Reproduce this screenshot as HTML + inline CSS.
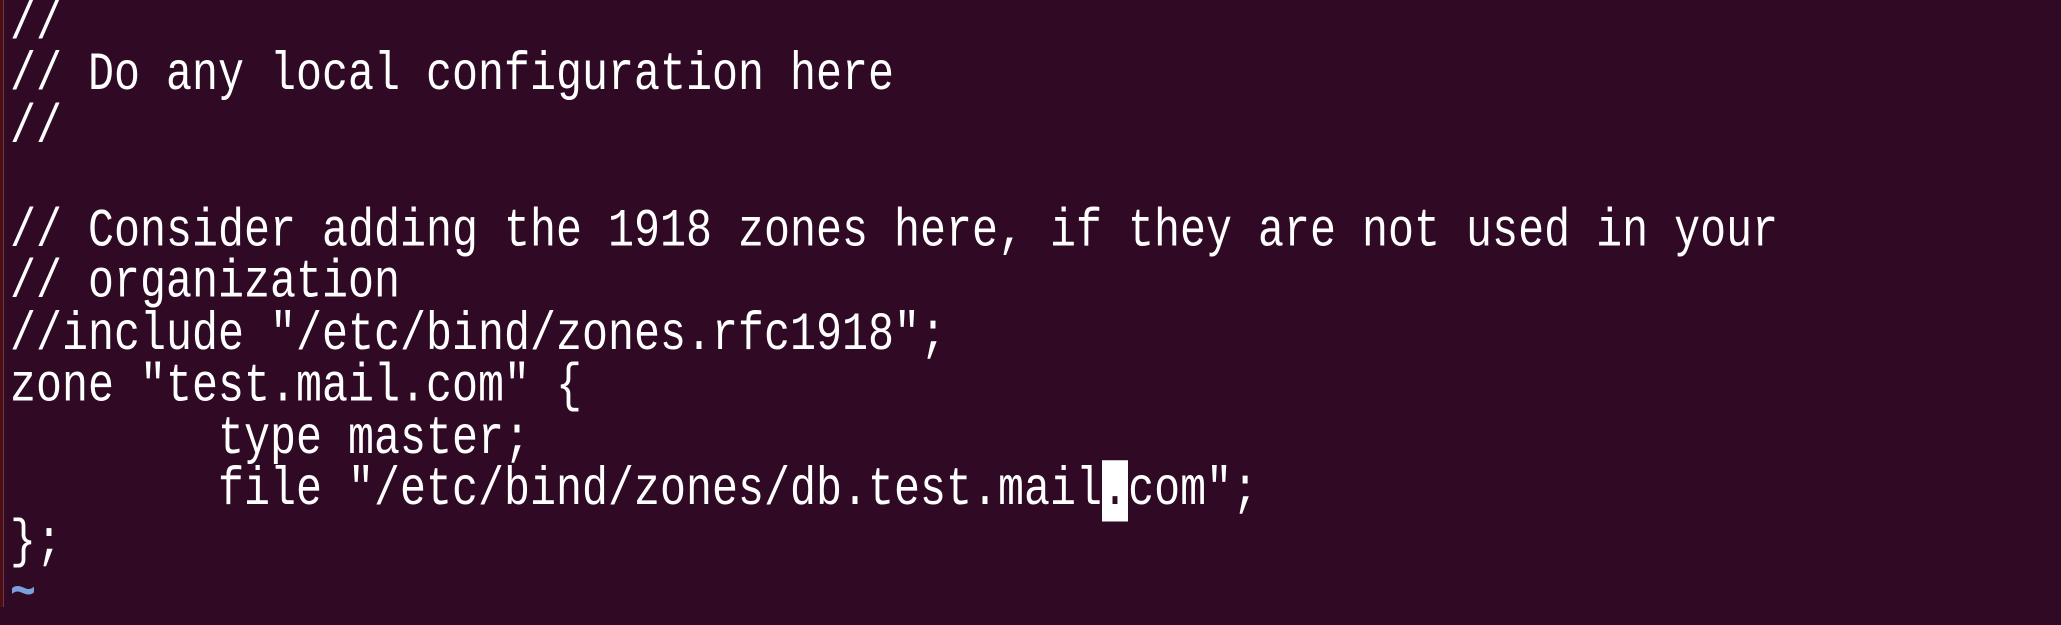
<!DOCTYPE html>
<html><head><meta charset="utf-8"><style>
html,body{margin:0;padding:0;}
body{width:2061px;height:607px;background:#300a24;overflow:hidden;position:relative;}
.edge{position:absolute;left:0;top:0;width:3px;height:607px;background:#4a0e14;}
.edge2{position:absolute;left:3px;top:0;width:1px;height:607px;background:#6a3a48;}
pre{position:absolute;left:10px;top:-1px;margin:0;font-family:"Liberation Mono","DejaVu Sans Mono",monospace;font-size:43.33px;line-height:41.47px;color:#fff;transform:scaleY(1.25);transform-origin:0 0;letter-spacing:0;}
.cur{background:#fff;color:#300a24;}
.t{color:#7a9fdc;font-weight:bold;}
</style></head><body>
<div class="edge"></div><div class="edge2"></div>
<pre>//
// Do any local configuration here
//

// Consider adding the 1918 zones here, if they are not used in your
// organization
//include "/etc/bind/zones.rfc1918";
zone "test.mail.com" {
        type master;
        file "/etc/bind/zones/db.test.mail<span class="cur">.</span>com";
};
<span class="t">~</span></pre>
</body></html>
